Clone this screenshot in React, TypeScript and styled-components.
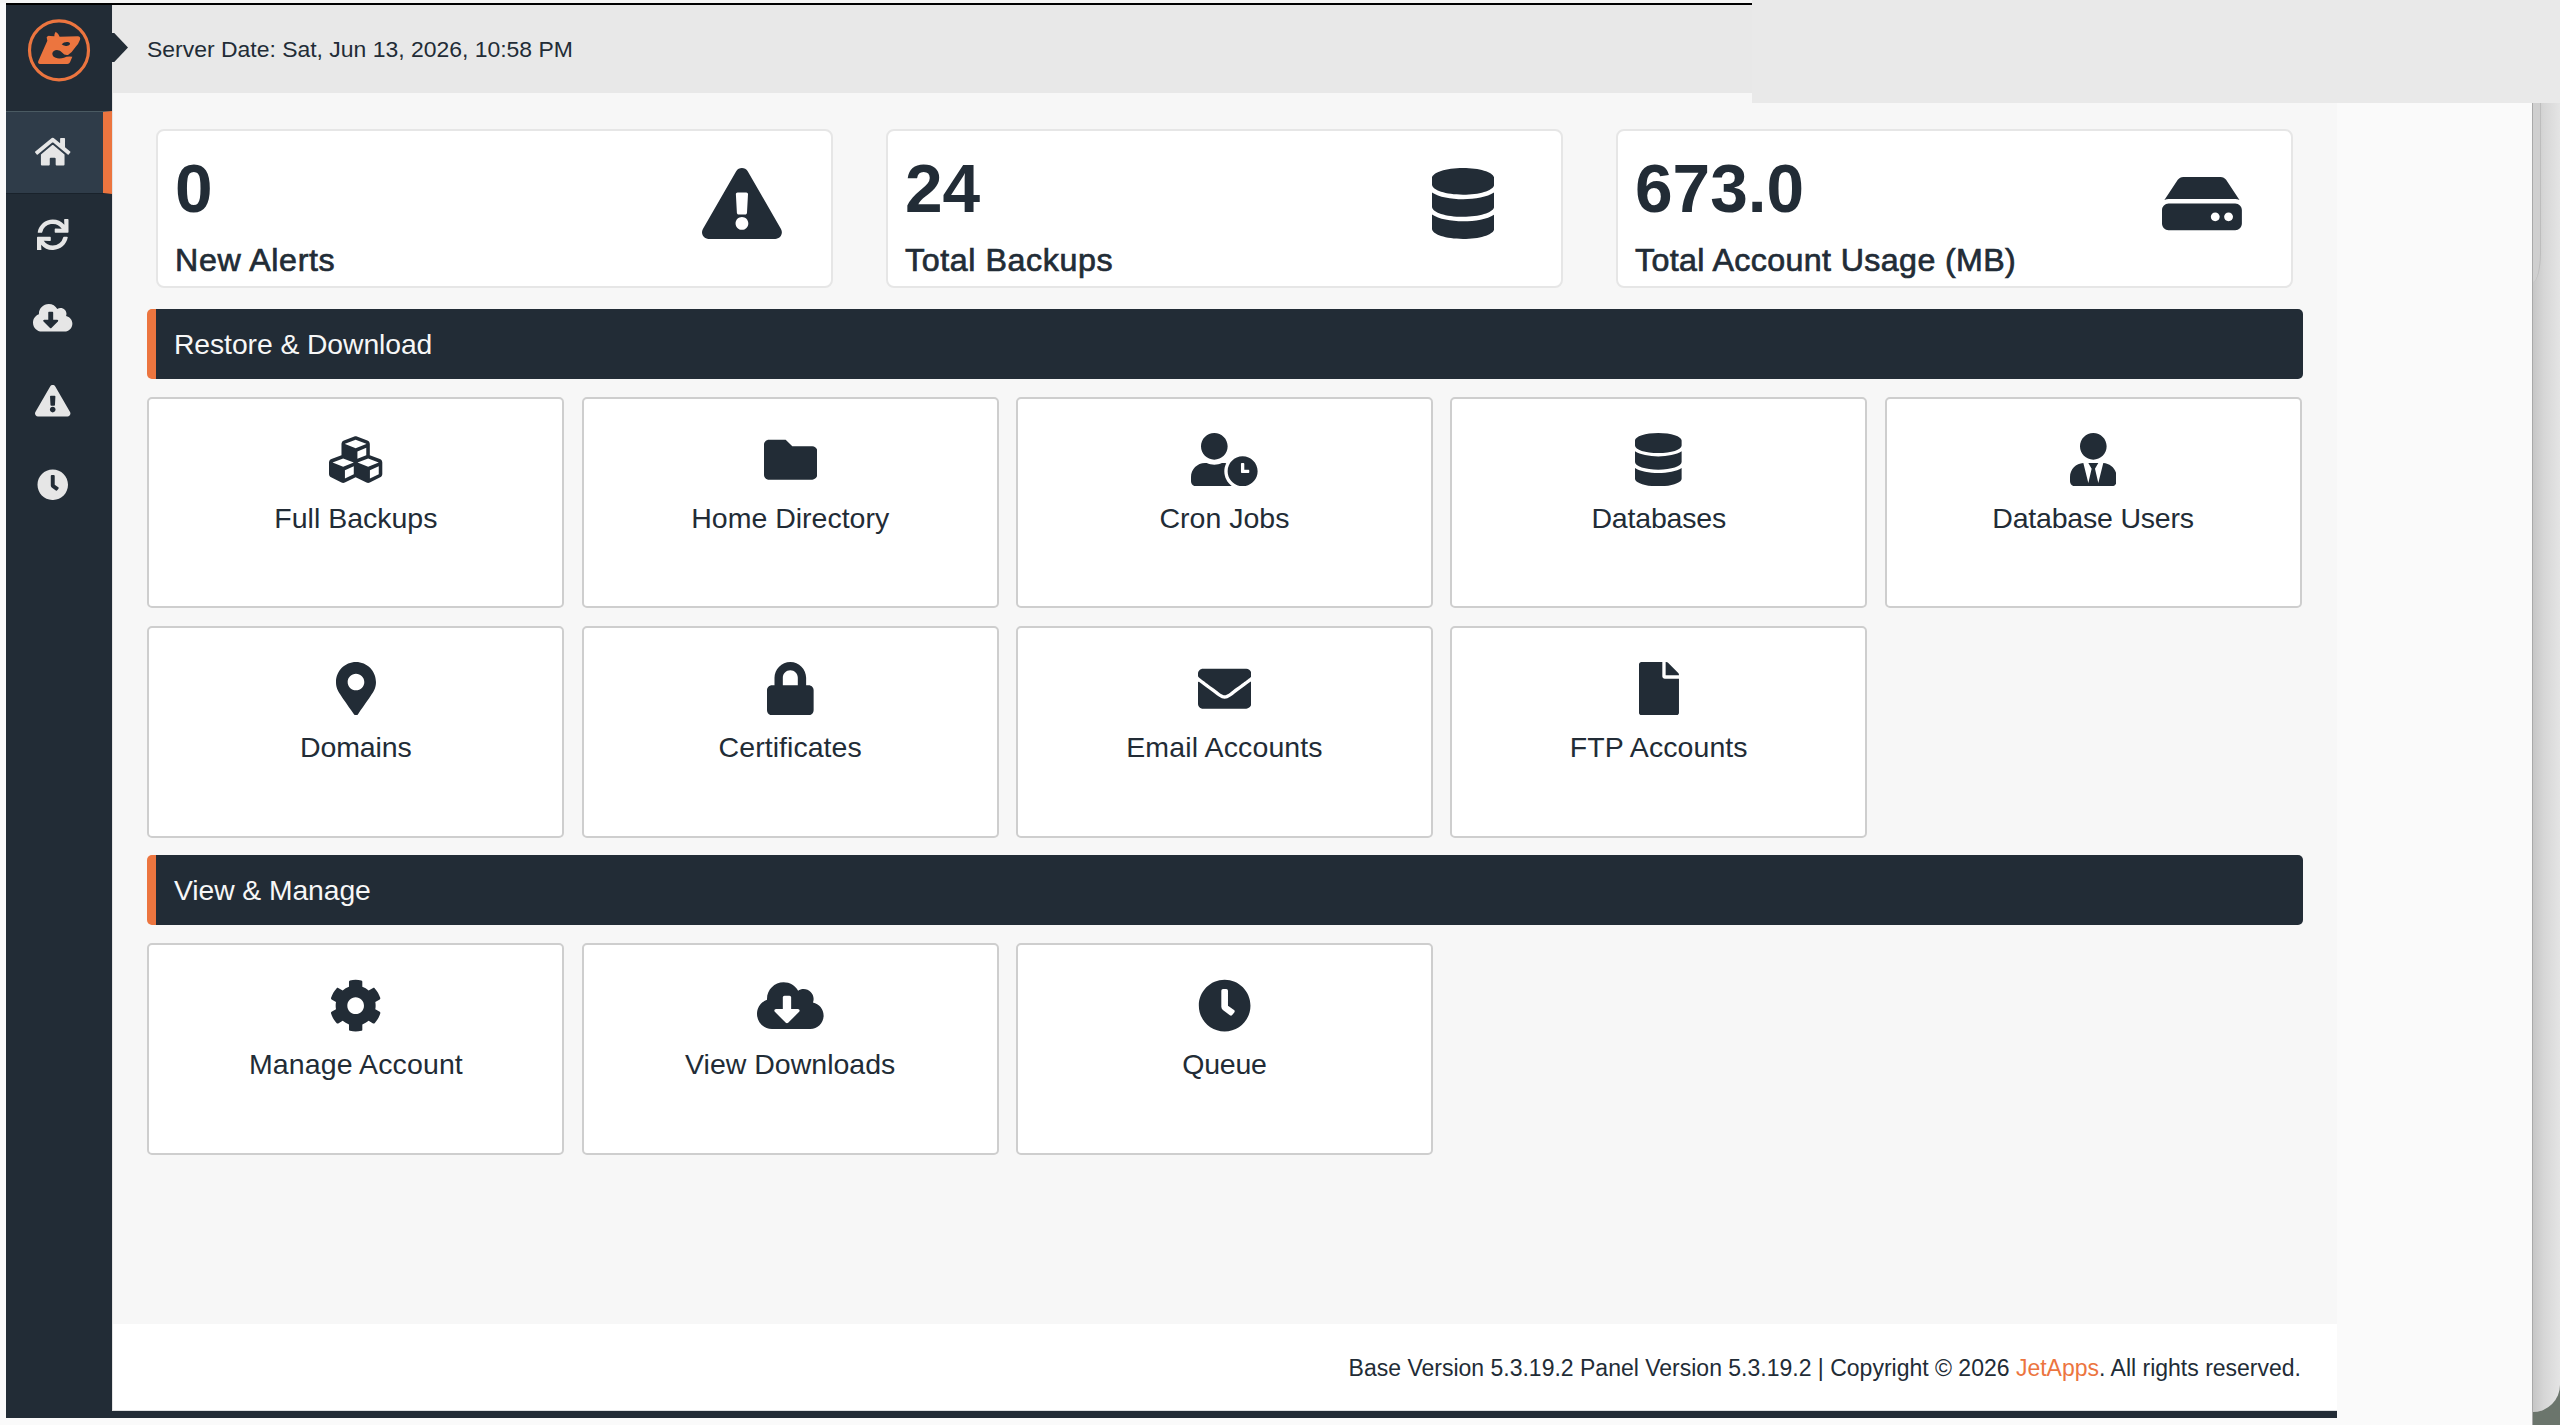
import React from "react";
import styled, { createGlobalStyle } from "styled-components";
import {
  FaHome,
  FaSync,
  FaCloudDownloadAlt,
  FaExclamationTriangle,
  FaClock,
  FaDatabase,
  FaHdd,
  FaCubes,
  FaFolder,
  FaUserClock,
  FaUserTie,
  FaMapMarkerAlt,
  FaLock,
  FaEnvelope,
  FaFile,
  FaCog,
} from "react-icons/fa";
import type { IconType } from "react-icons";

const ink = "#222c36";
const accent = "#ec753f";

const GlobalStyle = createGlobalStyle`
  *, *::before, *::after { box-sizing: border-box; }
  html, body { margin: 0; padding: 0; background: #fafafa; }
  body {
    font-family: "Liberation Sans", Arial, Helvetica, sans-serif;
    color: ${ink};
    overflow: hidden;
  }
`;

const Desktop = styled.div`
  position: relative;
  display: flex;
  width: 2560px;
  height: 1425px;
  overflow: hidden;
  background: #fafafa;
`;

const Browser = styled.div`
  flex: none;
  width: 2532px;
  padding: 3px 0 0 6px;
  background: linear-gradient(#f5f5f5 3px, #fafafa 3px);
`;

const Shell = styled.div`
  display: flex;
  width: 2331px;
  height: 1415px;
  border-top: 2px solid #000;
  border-bottom: 7px solid ${ink};
  background: #f7f7f7;
`;

const Sidebar = styled.nav`
  flex: none;
  width: 106px;
  height: 1413px;
  background: ${ink};
`;

const LogoBox = styled.div`
  position: relative;
  height: 106px;
  padding: 13px 0 0 21px;
`;

const Pointer = styled.div`
  position: absolute;
  left: 106px;
  top: 28px;
  width: 16px;
  height: 29px;
  background: ${ink};
  clip-path: polygon(0 0, 14% 0, 100% 50%, 14% 100%, 0 100%);
`;

/* Font Awesome glyphs are 512 units tall; $units is the glyph's own width. */
const Glyph = styled.span<{ $size: number; $units: number }>`
  display: block;
  svg {
    display: block;
    height: ${(p) => p.$size}px;
    width: ${(p) => (p.$size * p.$units) / 512}px;
  }
`;

const NavItem = styled.a<{ $active?: boolean }>`
  display: flex;
  align-items: center;
  justify-content: center;
  height: 83.3px;
  padding-right: ${(p) => (p.$active ? "3px" : "12px")};
  padding-bottom: 2.6px;
  border-top: 1px solid ${(p) => (p.$active ? "#4a5a62" : "transparent")};
  border-bottom: 1px solid ${(p) => (p.$active ? "#19222b" : "transparent")};
  border-right: ${(p) => (p.$active ? `9px solid ${accent}` : "0")};
  background: ${(p) => (p.$active ? "#2f3c49" : "transparent")};
  color: #e6e6e6;
`;

const Main = styled.main`
  display: flex;
  flex-direction: column;
  flex: 1;
  height: 1406px;
  border-left: 1px solid #e4e4e4;
`;

const TopBar = styled.header`
  height: 88px;
  padding: 30px 0 0 34px;
  background: #e8e8e8;
  font-size: 22.95px;
  line-height: 28px;
`;

const Body = styled.section`
  flex: 1;
  padding: 36px 34px 0;
`;

const Stats = styled.div`
  display: grid;
  grid-template-columns: repeat(3, 677px);
  gap: 53px;
  padding-left: 9px;
  margin-bottom: 21px;
`;

const StatCard = styled.div`
  display: flex;
  height: 159px;
  padding: 20px 0 0 17px;
  border: 2px solid #e6e6e6;
  border-radius: 8px;
  background: #fff;
`;

const StatText = styled.div`
  width: 527px;
`;

const StatValue = styled.div`
  font-size: 67.6px;
  font-weight: 700;
  line-height: 75px;
`;

const StatLabel = styled.div<{ $track: number }>`
  margin-top: 16px;
  font-size: 32.2px;
  line-height: 36px;
  letter-spacing: ${(p) => p.$track}px;
  -webkit-text-stroke: 0.7px ${ink};
`;

const StatIcon = styled.div`
  padding-top: 17px;
`;

const SectionBar = styled.h2`
  height: 70px;
  margin: 0 0 17.6px;
  padding-left: 18px;
  border-left: 9px solid ${accent};
  border-radius: 5px;
  background: ${ink};
  color: #f7f7f7;
  font-size: 28.3px;
  font-weight: 400;
  line-height: 71px;
  letter-spacing: -0.07px;
`;

const Tiles = styled.div`
  display: grid;
  grid-template-columns: repeat(5, 417px);
  grid-auto-rows: 211.8px;
  gap: 17.8px 17.3px;
  padding-left: 0.4px;
  margin-bottom: 17.5px;
`;

const Tile = styled.div`
  display: flex;
  flex-direction: column;
  align-items: center;
  padding-top: 34px;
  border: 2px solid #cecece;
  border-radius: 5px;
  background: #fff;
`;

const TileLabel = styled.span<{ $track?: number }>`
  margin-top: 15px;
  font-size: 28.5px;
  line-height: 34px;
  letter-spacing: ${(p) => p.$track ?? 0}px;
  white-space: nowrap;
`;

const Footer = styled.footer`
  height: 87px;
  padding: 30px 36px 0 0;
  border-bottom: 1px solid #dfe1e2;
  background: #fff;
  font-size: 23px;
  line-height: 28px;
  text-align: right;
  white-space: nowrap;
  a {
    color: ${accent};
    text-decoration: none;
  }
`;

const HeaderPatch = styled.div`
  position: absolute;
  left: 1752px;
  top: 0;
  width: 808px;
  height: 103px;
  background: #e9e9e9;
`;

const Backdrop = styled.div`
  position: relative;
  flex: 1;
  border-left: 1px solid #a9a9a9;
  background: #6b756c;
`;

const BackWindow = styled.div`
  height: 1412px;
  border-bottom-right-radius: 27px;
  background: linear-gradient(90deg, #c6c6c6, #d6d6d6 40%, #e4e4e4);
`;

const BackEdge = styled.div`
  position: absolute;
  left: 0;
  top: 60px;
  width: 8px;
  height: 222px;
  border-right: 1px solid #bdbdbd;
  border-bottom-right-radius: 8px 30px;
  background: #cfcfcf;
`;

const Logo = () => (
  <svg width="64" height="64" viewBox="81 54 192 192">
    <circle cx="177" cy="151" r="88.5" fill="none" stroke={accent} strokeWidth="9.5" />
    <path
      fill={accent}
      fillRule="evenodd"
      d="M115 183 L142 122 L140 112 Q143 106 150 108 L163 109 Q163 100 167 95 Q175 100 179 110 L233 109 Q243 110 240 119 Q236 131 226 142 Q216 158 204 165 Q193 167 187 158 Q181 150 171 150 Q159 151 157 160 Q156 172 172 175 Q184 176 192 173 Q201 168 217 170 L210 187 Q208 192 202 192 L120 192 Q112 191 115 183 Z M185 133 Q192 125 203 126 Q211 127 210 133 Q206 139 197 138 Q188 137 185 133 Z"
    />
  </svg>
);

type GlyphDef = [IconType, number];

const cloud: GlyphDef = [FaCloudDownloadAlt, 640];
const warning: GlyphDef = [FaExclamationTriangle, 576];
const clock: GlyphDef = [FaClock, 512];
const database: GlyphDef = [FaDatabase, 448];

const Icon = ({ def, size }: { def: GlyphDef; size: number }) => {
  const [Shape, units] = def;
  return (
    <Glyph $size={size} $units={units}>
      <Shape />
    </Glyph>
  );
};

const nav: GlyphDef[] = [[FaHome, 576], [FaSync, 512], cloud, warning, clock];

const stats: { value: string; label: string; icon: GlyphDef; track: number }[] = [
  { value: "0", label: "New Alerts", icon: warning, track: 0.65 },
  { value: "24", label: "Total Backups", icon: database, track: 0.6 },
  { value: "673.0", label: "Total Account Usage (MB)", icon: [FaHdd, 576], track: 0.38 },
];

const sections: { title: string; tiles: { label: string; icon: GlyphDef; track?: number }[] }[] = [
  {
    title: "Restore & Download",
    tiles: [
      { label: "Full Backups", icon: [FaCubes, 512] },
      { label: "Home Directory", icon: [FaFolder, 512] },
      { label: "Cron Jobs", icon: [FaUserClock, 640] },
      { label: "Databases", icon: database, track: -0.18 },
      { label: "Database Users", icon: [FaUserTie, 448], track: -0.2 },
      { label: "Domains", icon: [FaMapMarkerAlt, 384], track: -0.1 },
      { label: "Certificates", icon: [FaLock, 448], track: 0.05 },
      { label: "Email Accounts", icon: [FaEnvelope, 512], track: 0.12 },
      { label: "FTP Accounts", icon: [FaFile, 384], track: 0.08 },
    ],
  },
  {
    title: "View & Manage",
    tiles: [
      { label: "Manage Account", icon: [FaCog, 512], track: 0.12 },
      { label: "View Downloads", icon: cloud },
      { label: "Queue", icon: clock, track: -0.2 },
    ],
  },
];

export default function App() {
  return (
    <>
      <GlobalStyle />
      <Desktop>
        <Browser>
          <Shell>
            <Sidebar>
              <LogoBox>
                <Logo />
                <Pointer />
              </LogoBox>
              {nav.map((def, i) => (
                <NavItem key={i} $active={i === 0}>
                  <Icon def={def} size={31.5} />
                </NavItem>
              ))}
            </Sidebar>
            <Main>
              <TopBar>Server Date: Sat, Jun 13, 2026, 10:58 PM</TopBar>
              <Body>
                <Stats>
                  {stats.map(({ value, label, icon, track }) => (
                    <StatCard key={label}>
                      <StatText>
                        <StatValue>{value}</StatValue>
                        <StatLabel $track={track}>{label}</StatLabel>
                      </StatText>
                      <StatIcon>
                        <Icon def={icon} size={71} />
                      </StatIcon>
                    </StatCard>
                  ))}
                </Stats>
                {sections.map(({ title, tiles }) => (
                  <React.Fragment key={title}>
                    <SectionBar>{title}</SectionBar>
                    <Tiles>
                      {tiles.map(({ label, icon, track }) => (
                        <Tile key={label}>
                          <Icon def={icon} size={53.3} />
                          <TileLabel $track={track}>{label}</TileLabel>
                        </Tile>
                      ))}
                    </Tiles>
                  </React.Fragment>
                ))}
              </Body>
              <Footer>
                Base Version 5.3.19.2 Panel Version 5.3.19.2 | Copyright © 2026 <a>JetApps</a>. All rights reserved.
              </Footer>
            </Main>
          </Shell>
        </Browser>
        <Backdrop>
          <BackWindow />
          <BackEdge />
        </Backdrop>
        <HeaderPatch />
      </Desktop>
    </>
  );
}
